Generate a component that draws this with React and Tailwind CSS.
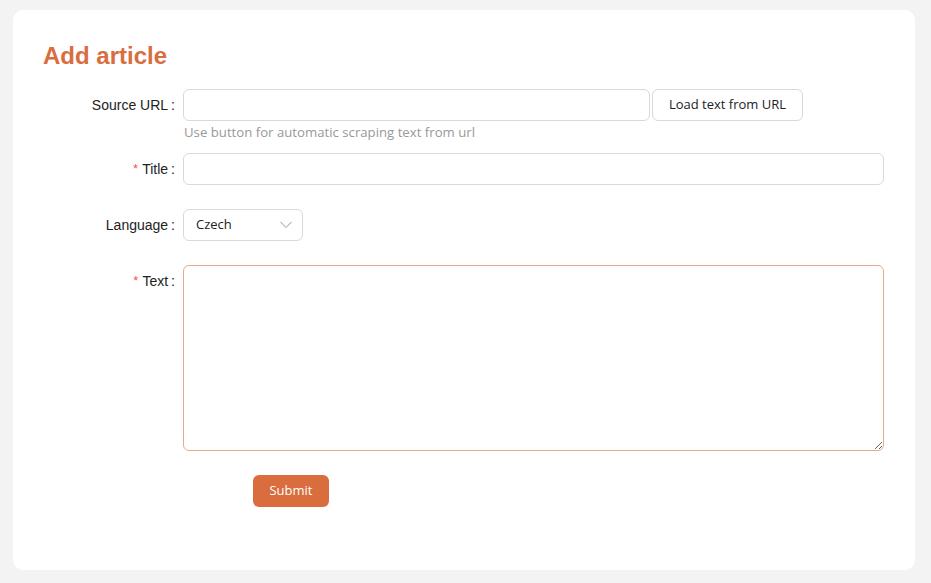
const labelCls =
  "w-[132px] shrink-0 flex justify-end items-center h-8 text-[14px] text-[#222] font-['Liberation_Sans',Arial,sans-serif]";

function Label({ required, children }) {
  return (
    <div className={labelCls}>
      {required && <span className="text-[#ff4d4f] mr-1 text-[13px]">*</span>}
      <span>{children}</span>
      <span className="ml-[3px]">:</span>
    </div>
  );
}

export default function App() {
  return (
    <div className="min-h-screen bg-[#f3f3f3] pt-[10px] pl-[13px] pr-[16px] pb-[13px] font-['Open_Sans',sans-serif]">
      <div className="bg-white rounded-[10px] h-[560px] pl-[30px] pr-[31px] pt-[30px]">
        <h1 className="text-[24px] font-bold text-[#d96d3d] font-['Liberation_Sans',Arial,sans-serif] leading-[32px] mb-[17px]">
          Add article
        </h1>

        {/* Source URL */}
        <div className="flex gap-2">
          <Label>Source URL</Label>
          <div className="flex-1">
            <div className="flex gap-[2px]">
              <input className="w-[467px] h-8 border border-[#d9d9d9] rounded-[6px] outline-none px-3" />
              <button className="w-[151px] h-8 border border-[#d9d9d9] rounded-[6px] bg-white text-[13px] text-[#222]">
                Load text from URL
              </button>
            </div>
            <p className="text-[13.2px] text-[#999] leading-[22px] pl-[1px]">
              Use button for automatic scraping text from url
            </p>
          </div>
        </div>

        {/* Title */}
        <div className="flex gap-2 mt-[10px]">
          <Label required>Title</Label>
          <input className="flex-1 h-8 border border-[#d9d9d9] rounded-[6px] outline-none px-3" />
        </div>

        {/* Language */}
        <div className="flex gap-2 mt-6">
          <Label>Language</Label>
          <div className="w-[120px] h-8 border border-[#d9d9d9] rounded-[6px] flex items-center justify-between pl-3 pr-[10px] text-[13px] text-[#222]">
            <span>Czech</span>
            <svg width="12" height="8" viewBox="0 0 12 8" fill="none" stroke="#bfbfbf" strokeWidth="1.1">
              <polyline points="0.5,1 6,6.5 11.5,1" />
            </svg>
          </div>
        </div>

        {/* Text */}
        <div className="flex gap-2 mt-6">
          <Label required>Text</Label>
          <textarea className="flex-1 h-[186px] border border-[#e5aa8c] rounded-[6px] outline-none px-3 py-1" />
        </div>

        <div className="mt-6 ml-[210px]">
          <button className="h-8 w-[76px] rounded-[6px] bg-[#d96d3d] text-white text-[13px]">
            Submit
          </button>
        </div>
      </div>
    </div>
  );
}
